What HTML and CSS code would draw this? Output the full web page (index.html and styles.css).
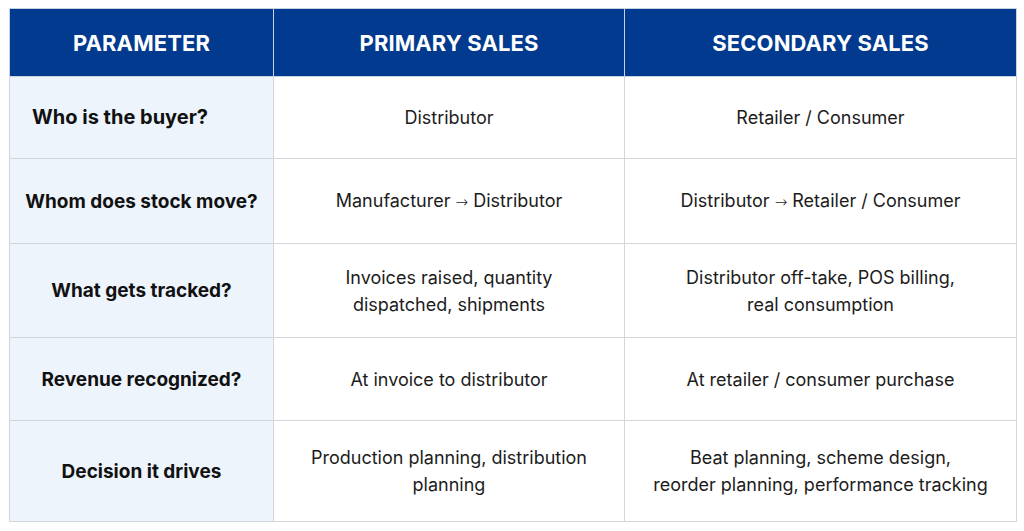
FILE: index.html
```html
<!DOCTYPE html>
<html>
<head>
<meta charset="utf-8">
<link rel="stylesheet" href="styles.css">
</head>
<body>
<table class="cmp">
  <colgroup>
    <col class="c1"><col class="c2"><col class="c3">
  </colgroup>
  <thead>
    <tr class="head">
      <th>PARAMETER</th><th>PRIMARY SALES</th><th>SECONDARY SALES</th>
    </tr>
  </thead>
  <tbody>
    <tr class="r1">
      <td class="param left">Who is the buyer?</td>
      <td>Distributor</td>
      <td>Retailer / Consumer</td>
    </tr>
    <tr class="r2">
      <td class="param">Whom does stock move?</td>
      <td>Manufacturer <span class="arrow">→</span> Distributor</td>
      <td>Distributor <span class="arrow">→</span> Retailer / Consumer</td>
    </tr>
    <tr class="r3">
      <td class="param">What gets tracked?</td>
      <td>Invoices raised, quantity<br>dispatched, shipments</td>
      <td>Distributor off-take, POS billing,<br>real consumption</td>
    </tr>
    <tr class="r4">
      <td class="param">Revenue recognized?</td>
      <td>At invoice to distributor</td>
      <td>At retailer / consumer purchase</td>
    </tr>
    <tr class="r5">
      <td class="param">Decision it drives</td>
      <td>Production planning, distribution<br>planning</td>
      <td>Beat planning, scheme design,<br>reorder planning, performance tracking</td>
    </tr>
  </tbody>
</table>
</body>
</html>
```
FILE: styles.css
```css
html, body {
  margin: 0;
  background: #ffffff;
}
body {
  padding: 8px 0 0 9px;
  font-family: Inter, "Noto Sans", sans-serif;
  color: #1a1a1a;
}
.cmp {
  border-collapse: collapse;
  table-layout: fixed;
  width: 1007px;
}
.c1 { width: 264px; }
.c2 { width: 351px; }
.c3 { width: 392px; }
.cmp th, .cmp td {
  border: 1px solid #d3d6db;
  text-align: center;
  vertical-align: middle;
  padding: 0 8px;
}
.cmp th {
  background: #013a8e;
  color: #ffffff;
  font-weight: 700;
  font-size: 22px;
  letter-spacing: 0.1px;
  border-color: #c9d2e2;
}
.head { height: 68px; }
.cmp td {
  font-size: 18px;
  line-height: 27px;
  font-weight: 400;
  color: #1c1c1c;
}
.cmp td.param {
  background: #eef4fc;
  font-weight: 700;
  font-size: 19px;
  color: #111111;
}
.cmp td.param.left {
  text-align: left;
  padding-left: 22px;
  font-size: 20px;
}
.arrow {
  font-family: "DejaVu Sans", sans-serif;
  font-size: 15px;
  font-weight: 300;
}
.r1 { height: 82px; }
.r2 { height: 85px; }
.r3 { height: 94px; }
.r4 { height: 83px; }
.r5 { height: 101px; }
```
